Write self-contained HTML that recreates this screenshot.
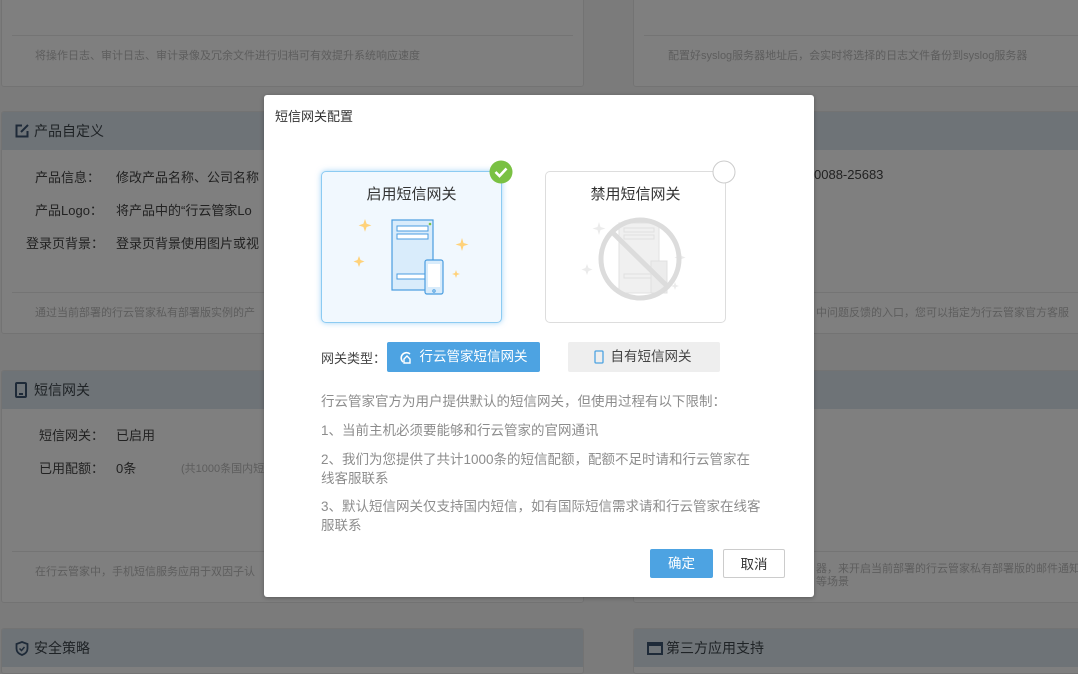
<!DOCTYPE html>
<html><head><meta charset="utf-8"><style>
*{box-sizing:border-box;margin:0;padding:0}
html{width:1078px;height:674px;overflow:hidden;background:#f6f6f6}
body{width:1078px;height:674px;overflow:hidden;background:#f6f6f6;font-family:"Liberation Sans","Noto Sans CJK SC",sans-serif;position:relative;font-size:13px}
.card{position:absolute;background:#ffffff;border:1px solid #e6e6e6;border-radius:3px;overflow:hidden}
.hd{position:absolute;left:0;right:0;height:38px;background:#dce6ef;color:#3e464d;font-size:14px;line-height:38px;padding-left:32px}
.line{position:absolute;left:10px;right:0;border-top:1px solid #e8e8e8}
.ft{position:absolute;color:#bbbbbb;font-size:11px;white-space:nowrap}
.t{position:absolute;color:#444;font-size:13px;white-space:nowrap}
.mask{position:absolute;left:0;top:0;width:1078px;height:674px;background:rgba(0,0,0,.5)}
.modal{position:absolute;left:264px;top:95px;width:550px;height:502px;background:#fff;border-radius:3px;box-shadow:0 1px 4px rgba(0,0,0,.3)}
.opt{position:absolute;width:181px;height:152px;border-radius:5px;text-align:center;font-size:15px;color:#333;padding-top:11px}
.desc{position:absolute;left:57px;color:#8c8c8c;font-size:13.5px;line-height:19px;width:440px}
.btn{position:absolute;height:29px;line-height:29px;text-align:center;font-size:13.5px;border-radius:2px}
</style></head><body>
<div class="card" style="left:1px;top:-5px;width:583px;height:92px"><div class="line" style="top:39px;right:10px"></div><div class="ft" style="left:33px;top:51px">将操作日志、审计日志、审计录像及冗余文件进行归档可有效提升系统响应速度</div></div>
<div class="card" style="left:1px;top:111px;width:583px;height:223px">
<div class="hd" style="top:0">产品自定义</div>
<svg style="position:absolute;left:13px;top:12px" width="14" height="14" viewBox="0 0 14 14"><path d="M7 1.5H1.5v11h11V7" fill="none" stroke="#3d5470" stroke-width="2"/><path d="M6 8l7-7" stroke="#3d5470" stroke-width="2"/></svg>
<div class="t" style="left:33px;top:55px">产品信息：</div><div class="t" style="left:114px;top:55px">修改产品名称、公司名称</div>
<div class="t" style="left:33px;top:88px">产品Logo：</div><div class="t" style="left:114px;top:88px">将产品中的“行云管家Lo</div>
<div class="t" style="left:24px;top:121px">登录页背景：</div><div class="t" style="left:114px;top:121px">登录页背景使用图片或视</div>
<div class="line" style="top:180px"></div><div class="ft" style="left:33px;top:192px">通过当前部署的行云管家私有部署版实例的产</div></div>
<div class="card" style="left:1px;top:370px;width:583px;height:233px">
<div class="hd" style="top:0">短信网关</div>
<svg style="position:absolute;left:13px;top:11px" width="12" height="16" viewBox="0 0 12 16"><rect x="1" y="1" width="10" height="14" rx="1" fill="none" stroke="#3d5470" stroke-width="2"/><rect x="4" y="11" width="4" height="2" fill="#3d5470"/></svg>
<div class="t" style="left:37px;top:54px">短信网关：</div><div class="t" style="left:114px;top:54px">已启用</div>
<div class="t" style="left:37px;top:87px">已用配额：</div><div class="t" style="left:114px;top:87px">0条</div><div class="ft" style="left:179px;top:89px">(共1000条国内短</div>
<div class="line" style="top:180px"></div><div class="ft" style="left:33px;top:192px">在行云管家中，手机短信服务应用于双因子认</div></div>
<div class="card" style="left:1px;top:628px;width:583px;height:46px">
<div class="hd" style="top:0">安全策略</div>
<svg style="position:absolute;left:13px;top:12px" width="14" height="15" viewBox="0 0 14 15"><path d="M7 1L1.5 3v4.5C1.5 11 4 13 7 14c3-1 5.5-3 5.5-6.5V3z" fill="none" stroke="#3d5470" stroke-width="1.8"/><path d="M4.5 7.5l2 2 3-3.5" fill="none" stroke="#3d5470" stroke-width="1.5"/></svg></div>
<div class="card" style="left:633px;top:-5px;width:450px;height:92px"><div class="line" style="top:39px"></div><div class="ft" style="left:34px;top:51px">配置好syslog服务器地址后，会实时将选择的日志文件备份到syslog服务器</div></div>
<div class="card" style="left:633px;top:111px;width:450px;height:223px"><div class="hd" style="top:0"></div>
<div class="t" style="left:180px;top:55px">0088-25683</div>
<div class="line" style="top:180px"></div><div class="ft" style="left:182px;top:192px">中问题反馈的入口，您可以指定为行云管家官方客服</div></div>
<div class="card" style="left:633px;top:370px;width:450px;height:233px"><div class="hd" style="top:0"></div>
<div class="line" style="top:180px"></div><div class="ft" style="left:182px;top:192px;line-height:13px">器，来开启当前部署的行云管家私有部署版的邮件通知<br>等场景</div></div>
<div class="card" style="left:633px;top:628px;width:450px;height:46px"><div class="hd" style="top:0">第三方应用支持</div>
<svg style="position:absolute;left:13px;top:13px" width="16" height="13" viewBox="0 0 16 13"><rect x="1" y="1" width="14" height="11" fill="none" stroke="#3d5470" stroke-width="2"/><rect x="1" y="1" width="14" height="3" fill="#3d5470"/></svg></div>
<div class="mask"></div>

<div class="modal">
<div style="position:absolute;left:11px;top:11px;font-size:13px;color:#333">短信网关配置</div>
<div class="opt" style="left:57px;top:76px;background:#f1f8fe;border:1px solid #8ccbf2;box-shadow:0 0 6px rgba(100,180,240,.6)">启用短信网关
<svg style="position:absolute;left:30px;top:40px" width="120" height="90" viewBox="0 0 120 90">
<g fill="#ffd27a"><path d="M20 10l2 6 6 2-6 2-2 6-2-6-6-2 6-2z" transform="translate(-3,-1) scale(.8)"/><path d="M110 26l1.5 5 5 1.5-5 1.5-1.5 5-1.5-5-5-1.5 5-1.5z"/><path d="M7 44l1.5 4 4 1.5-4 1.5-1.5 4-1.5-4-4-1.5 4-1.5z"/><path d="M104 58l1 3 3 1-3 1-1 3-1-3-3-1 3-1z"/></g>
<rect x="40" y="8" width="41" height="70" fill="#d9ecfb" stroke="#4a9de0" stroke-width="1.2"/>
<rect x="45" y="14" width="31" height="5" fill="#fff" stroke="#4a9de0"/><rect x="45" y="22" width="31" height="5" fill="#fff" stroke="#4a9de0"/><rect x="45" y="62" width="31" height="5" fill="#fff" stroke="#4a9de0"/>
<circle cx="78" cy="12" r="1.3" fill="#7ac143"/>
<rect x="73" y="48" width="18" height="34" rx="2" fill="#d9ecfb" stroke="#4a9de0" stroke-width="1.2"/><rect x="76" y="52" width="12" height="23" fill="#fff"/><circle cx="82" cy="79" r="1.2" fill="none" stroke="#4a9de0"/>
</svg></div>
<svg style="position:absolute;left:225px;top:65px" width="24" height="24"><circle cx="12" cy="12" r="11.5" fill="#7ac143"/><path d="M6.5 12l4 4 7-7.5" fill="none" stroke="#fff" stroke-width="2.6"/></svg>
<div class="opt" style="left:281px;top:76px;background:#fff;border:1px solid #ddd">禁用短信网关
<svg style="position:absolute;left:30px;top:40px" width="120" height="90" viewBox="0 0 120 90">
<g fill="#ebebeb"><path d="M23 10l1.5 5 5 1.5-5 1.5-1.5 5-1.5-5-5-1.5 5-1.5z"/><path d="M104 40l1.5 4 4 1.5-4 1.5-1.5 4-1.5-4-4-1.5 4-1.5z"/><path d="M11 52l1.5 4 4 1.5-4 1.5-1.5 4-1.5-4-4-1.5 4-1.5z"/><path d="M99 70l1 3 3 1-3 1-1 3-1-3-3-1 3-1z"/></g>
<rect x="43" y="11" width="40" height="70" fill="#f0f0f0" stroke="#e2e2e2"/><rect x="48" y="16" width="30" height="4" fill="none" stroke="#e0e0e0"/><rect x="48" y="23" width="30" height="4" fill="none" stroke="#e0e0e0"/><rect x="48" y="62" width="30" height="4" fill="none" stroke="#e0e0e0"/>
<rect x="75" y="49" width="16" height="32" fill="#ececec" stroke="#e0e0e0"/>
<circle cx="64" cy="47" r="39" fill="none" stroke="#dcdcdc" stroke-width="5"/><path d="M36 20l56 55" stroke="#dcdcdc" stroke-width="5"/>
</svg></div>
<svg style="position:absolute;left:448px;top:65px" width="24" height="24"><circle cx="12" cy="12" r="11" fill="#fff" stroke="#ccc"/></svg>
<div style="position:absolute;left:57px;top:253px;color:#444;font-size:13px">网关类型：</div>
<div class="btn" style="left:123px;top:247px;width:153px;height:30px;line-height:30px;background:#4da3e2;color:#fff">
<svg style="position:absolute;left:12px;top:8px" width="14" height="14" viewBox="0 0 14 14"><path d="M4 12a5 5 0 1 1 7-8" fill="none" stroke="#fff" stroke-width="1.6"/><path d="M5 9l3-3 3 3v4H5z" fill="none" stroke="#fff" stroke-width="1.4"/></svg>
<span style="padding-left:20px">行云管家短信网关</span></div>
<div class="btn" style="left:304px;top:247px;width:152px;height:30px;line-height:30px;background:#eeeeee;color:#444">
<svg style="position:absolute;left:26px;top:8px" width="10" height="14" viewBox="0 0 10 14"><rect x="1" y="1" width="8" height="12" rx="1" fill="none" stroke="#4da3e2" stroke-width="1.3"/></svg>
<span style="padding-left:14px">自有短信网关</span></div>
<div class="desc" style="top:297px">行云管家官方为用户提供默认的短信网关，但使用过程有以下限制：</div>
<div class="desc" style="top:326px">1、当前主机必须要能够和行云管家的官网通讯</div>
<div class="desc" style="top:355px;width:430px">2、我们为您提供了共计1000条的短信配额，配额不足时请和行云管家在线客服联系</div>
<div class="desc" style="top:402px;width:440px">3、默认短信网关仅支持国内短信，如有国际短信需求请和行云管家在线客服联系</div>
<div class="btn" style="left:386px;top:454px;width:63px;background:#4da3e2;color:#fff">确定</div>
<div class="btn" style="left:459px;top:454px;width:62px;background:#fff;border:1px solid #ccc;color:#333">取消</div>
</div>
</body></html>
